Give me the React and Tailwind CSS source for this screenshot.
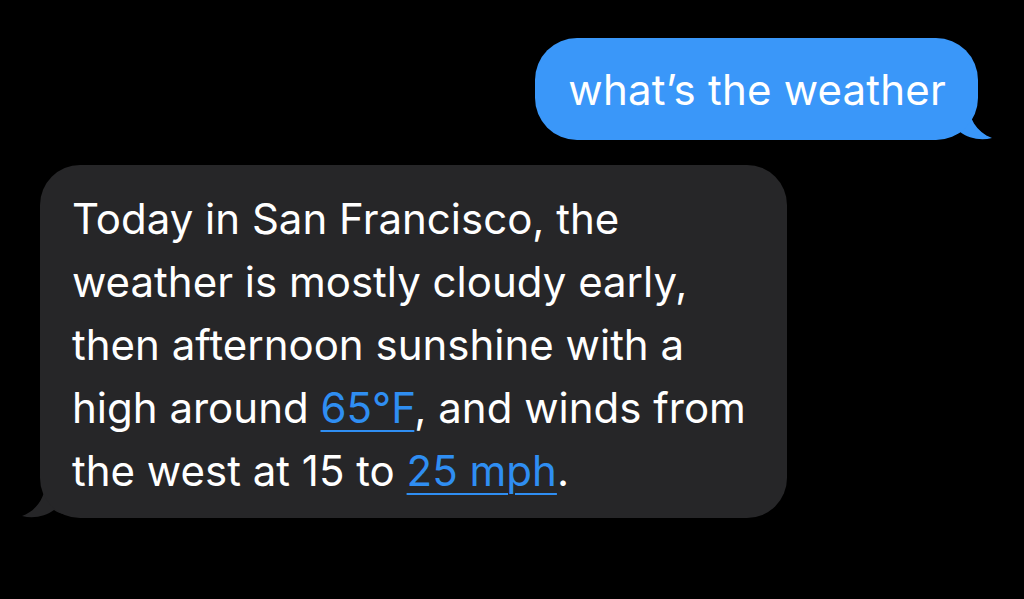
export default function App() {
  return (
    <div className="w-[1024px] h-[599px] bg-black overflow-hidden flex flex-col" style={{ fontFamily: 'Inter, "Noto Sans", sans-serif' }}>
      <div className="flex justify-end pt-[38px] pr-[46px]">
        <div className="relative">
          <div className="relative z-10 bg-[#3a97f9] rounded-[42px] h-[102px] pl-[33px] pr-[32px] flex items-center text-white text-[42px] leading-none tracking-[0.2px]">
            <span className="mt-[1px]">what’s the weather</span>
          </div>
          <svg className="absolute right-[-14px] bottom-0 z-0" width="60" height="40" viewBox="0 0 60 40">
            <path d="M10 0 H36 C36 18 44 32 60 38 C48 41 36 38 28 32 C22 36 14 38 0 38 Z" fill="#3a97f9" />
          </svg>
        </div>
      </div>
      <div className="flex justify-start pt-[25px] pl-[40px]">
        <div className="relative">
          <div className="relative z-10 bg-[#262628] rounded-[40px] w-[747px] pl-[32px] pr-[10px] pt-[22px] pb-[16px] text-white text-[42px] leading-[63px] whitespace-nowrap">
            Today in San Francisco, the<br />
            weather is mostly cloudy early,<br />
            then afternoon sunshine with a<br />
            high around <span className="text-[#2f8ef2] underline decoration-[2px] underline-offset-[7px]">65°F</span>, and winds from<br />
            the west at 15 to <span className="text-[#2f8ef2] underline decoration-[2px] underline-offset-[7px]">25 mph</span>.
          </div>
          <svg className="absolute left-[-18px] bottom-0 z-0" width="60" height="40" viewBox="0 0 60 40">
            <path d="M50 0 H24 C24 18 16 32 0 38 C12 41 24 38 32 32 C38 36 46 38 60 38 Z" fill="#262628" />
          </svg>
        </div>
      </div>
    </div>
  );
}
